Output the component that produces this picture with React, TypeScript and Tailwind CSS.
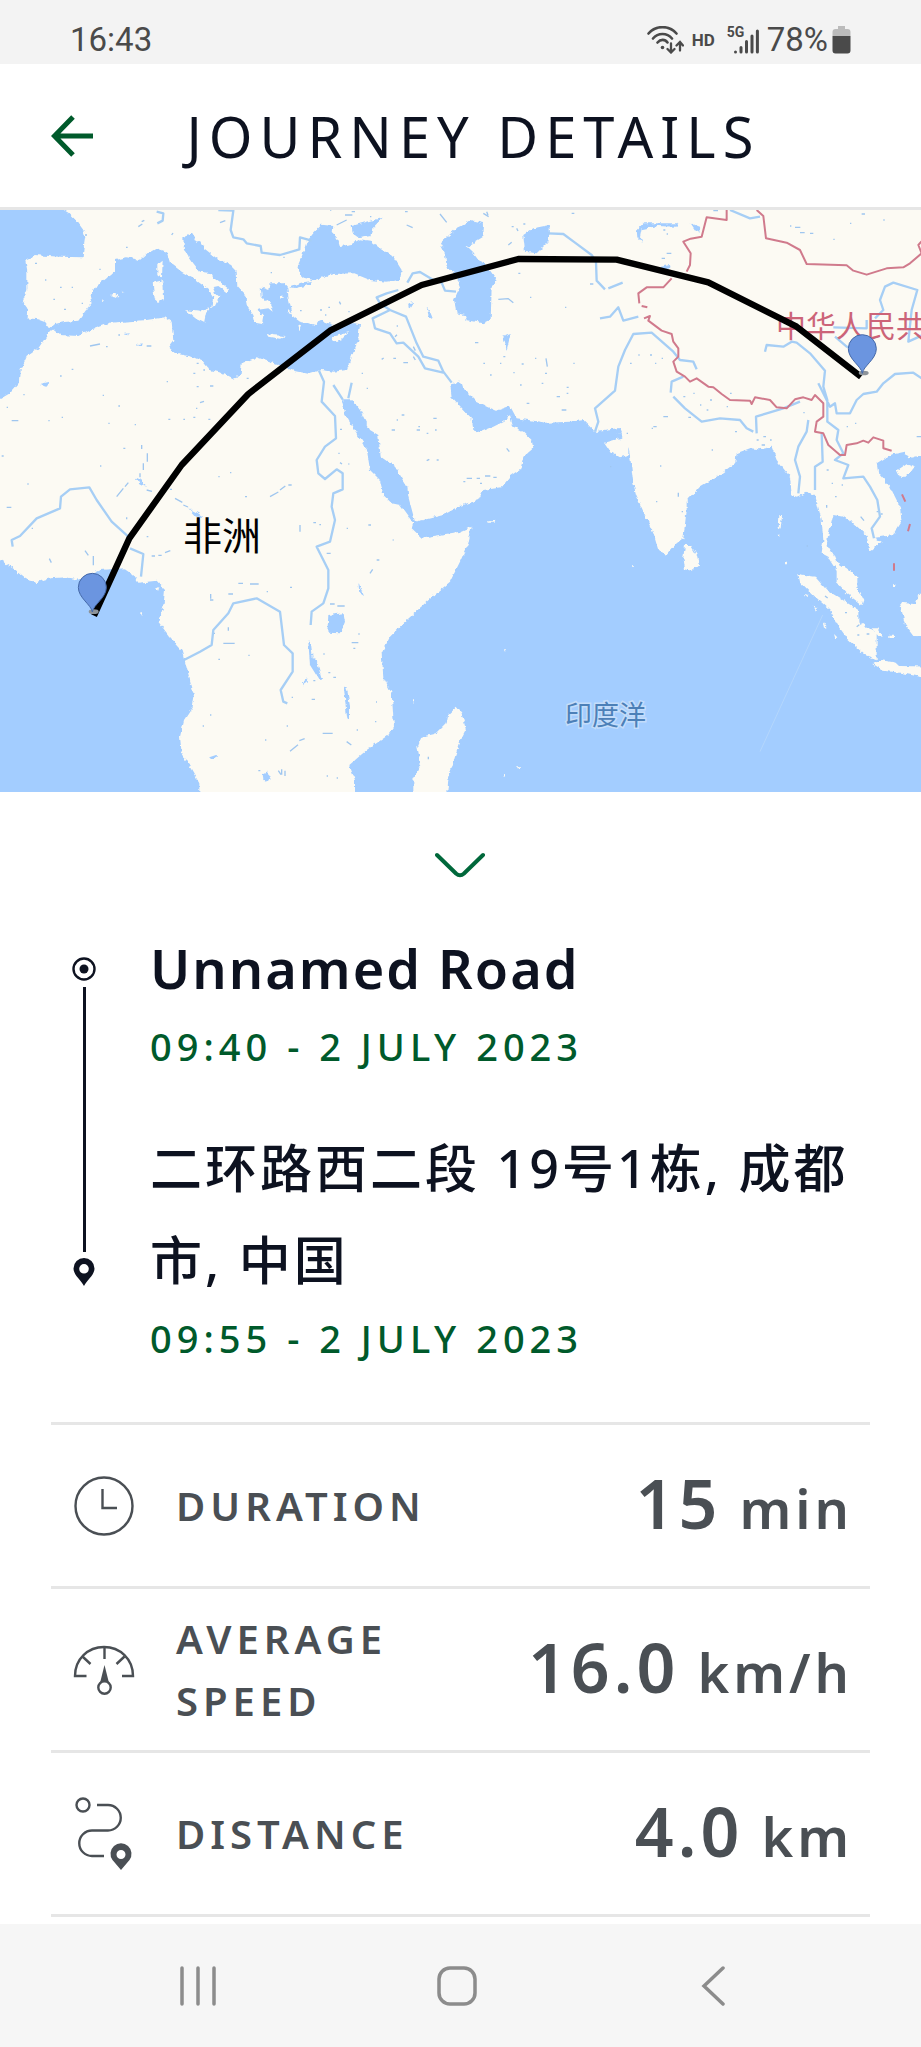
import { ReactNode } from "react";

// geography is drawn on a 2763 wide grid, three units for each pixel of the map
const seas = [
  // Atlantic and Mediterranean
  "M0 20L175 20 205 38 232 65 250 90 256 110 252 135 248 172 180 170 100 165 98 172 76 182 82 215 82 270 68 305 82 325 80 355 115 358 135 365 150 385 165 372 190 366 235 362 262 325 275 310 270 290 290 258 345 215 345 180 380 172 420 180 440 162 470 145 500 155 510 188 545 215 580 235 600 250 625 268 640 290 633 328 645 318 658 290 645 278 638 262 655 258 680 277 687 268 660 245 640 232 635 220 600 215 580 190 560 160 552 150 550 112 578 100 588 125 600 122 612 145 650 175 690 195 710 215 712 260 735 285 742 320 760 345 766 368 786 372 790 350 770 330 805 325 818 335 812 318 785 290 782 262 805 270 808 250 852 250 862 262 865 290 880 350 900 365 950 375 960 360 1000 375 1035 370 1060 370 1080 372 1075 420 1055 470 1040 510 1000 515 965 510 925 522 880 512 830 492 770 472 725 490 722 520 705 538 670 520 630 510 610 485 580 472 525 460 505 440 520 420 515 365 495 352 440 360 330 368 270 390 235 408 180 405 158 388 150 392 135 415 115 445 80 470 62 510 60 545 30 580 0 597 -40 597 -40 20Z",
  // Black Sea, Azov, Marmara
  "M965 74L1000 78 998 98 1012 112 1020 138 1055 132 1080 118 1110 122 1140 145 1180 170 1205 210 1200 240 1160 245 1110 240 1060 220 1000 222 940 240 905 232 892 200 905 170 920 125 940 100Z",
  "M1055 78L1090 68 1148 53 1120 82 1115 108 1080 114 1058 98Z",
  "M865 262L900 248 940 242 925 256 890 264Z",
  // Caspian, Aral
  "M1370 85L1320 130 1335 160 1340 200 1365 220 1380 260 1362 300 1370 340 1395 345 1400 360 1450 370 1472 360 1475 262 1490 240 1455 190 1435 180 1420 160 1400 140 1450 110 1452 70 1410 60 1385 78Z",
  "M1570 105L1600 85 1648 75 1650 98 1645 125 1610 160 1575 155Z",
  // South Atlantic
  "M-40 1080L0 1080 40 1105 85 1140 110 1147 150 1135 200 1132 235 1140 300 1110 370 1105 400 1125 415 1148 470 1142 495 1170 490 1220 475 1265 505 1305 545 1350 555 1385 570 1440 583 1490 578 1520 552 1560 540 1610 545 1660 575 1710 598 1750 598 1800 -40 1800Z",
  // Red Sea, Gulf, Indian Ocean, South China Sea
  "M1025 598L1055 598 1080 630 1110 690 1135 705 1142 770 1185 800 1222 860 1225 890 1245 965 1270 960 1330 945 1380 918 1435 900 1450 870 1505 862 1530 830 1560 810 1570 770 1600 745 1595 720 1570 695 1540 680 1530 645 1510 665 1480 680 1440 697 1420 690 1415 655 1400 640 1380 618 1355 590 1350 550 1380 545 1400 575 1430 605 1490 632 1530 618 1550 655 1640 668 1710 665 1750 660 1785 695 1820 695 1860 685 1868 712 1812 728 1830 755 1860 772 1885 765 1885 740 1892 780 1900 850 1910 890 1935 945 1960 1000 1975 1050 2000 1065 2030 1030 2050 1015 2060 930 2060 905 2075 888 2100 860 2150 830 2205 790 2210 760 2250 745 2280 748 2315 740 2330 780 2370 830 2375 885 2390 890 2425 875 2445 885 2465 960 2470 1020 2465 1060 2485 1070 2510 1110 2510 1145 2540 1180 2585 1215 2590 1200 2572 1165 2572 1130 2540 1105 2508 1085 2500 1065 2480 1035 2485 1005 2500 945 2530 950 2560 970 2600 1005 2608 1055 2645 1025 2625 1013 2680 1005 2705 965 2700 920 2670 860 2635 820 2630 790 2670 765 2715 755 2725 775 2800 758 2800 1800 1065 1800 1065 1740 1048 1695 1100 1650 1165 1605 1182 1580 1175 1480 1150 1430 1145 1360 1170 1310 1210 1270 1280 1205 1350 1145 1380 1085 1405 1030 1415 980 1380 995 1265 1013 1235 985 1240 970 1200 915 1175 910 1150 885 1140 840 1110 810 1100 745 1070 700 1035 640Z",
  // lakes
  "M985 1245L1030 1240 1035 1265 1022 1300 982 1298Z",
  "M925 1325L932 1325 938 1370 952 1390 966 1438 958 1440 930 1395Z",
  "M1032 1460L1040 1462 1050 1515 1050 1560 1042 1555 1036 1510Z",
  "M788 1722L800 1715 812 1728 803 1745 790 1740Z",
  "M906 1450L922 1434 920 1448 908 1456Z",
  "M628 1672L650 1664 650 1672 632 1680Z",
  "M1910 90L1930 70 1975 70 2035 70 2030 80 1970 78 1925 88 1920 112 1928 130 1912 112Z",
  "M2072 70L2100 80 2102 98 2088 94Z",
  "M1975 202L2010 195 2012 205 1980 210Z",
  "M1220 312L1242 305 1232 322Z",
  "M1280 322L1292 340 1298 355 1286 348Z",
  "M1510 410L1532 402 1520 450 1516 430Z",
  "M565 925L592 938 610 950 588 950Z",
  "M120 552L150 545 140 560Z",
  "M410 832L430 848 438 860 418 850Z",
  "M372 402L390 400 384 406Z M412 432L428 430 426 438 414 438Z",
  "M1795 692L1860 684 1866 700 1800 702Z",
  "M1075 1145L1082 1165 1092 1188 1078 1178Z",
];

const islands = [
  "M555 330L600 335 630 325 618 340 612 368 590 358Z",
  "M458 248L490 240 492 295 474 306 464 298Z",
  "M472 195L488 182 486 232 472 226Z",
  "M800 402L825 406 858 408 840 416 805 410Z",
  "M995 412L1048 396 1025 418 1005 424Z",
  "M330 285L345 278 355 287 344 293Z M303 302L312 300 308 306Z M362 275L370 275 366 279Z",
  "M1000 100L1030 92 1052 98 1050 112 1055 130 1030 138 1020 125Z",
  "M798 300L812 310 818 322 804 318Z M836 288L850 292 838 296Z M868 330L880 345 866 340Z M895 372L903 378 898 392Z",
  // Madagascar
  "M1240 1800L1240 1740 1262 1690 1252 1640 1265 1610 1310 1600 1340 1570 1345 1545 1370 1520 1385 1540 1398 1590 1380 1625 1365 1670 1345 1740 1340 1800Z",
  // Sri Lanka, Socotra
  "M2055 1035L2072 1035 2090 1065 2097 1095 2075 1112 2055 1108 2050 1070Z",
  "M1464 964L1486 962 1484 968 1466 968Z",
  // Sumatra, Java, Borneo, Hainan
  "M2395 1122L2445 1130 2480 1170 2520 1195 2575 1230 2575 1265 2600 1280 2630 1300 2630 1378 2595 1365 2545 1320 2520 1285 2490 1230 2440 1185 2400 1145Z",
  "M2620 1392L2640 1380 2690 1388 2700 1398 2800 1400 2800 1438 2700 1418 2650 1412Z",
  "M2700 1208L2745 1212 2755 1185 2800 1180 2800 1310 2740 1308 2715 1275Z",
  "M2690 810L2720 790 2745 800 2720 830 2700 830Z",
  "M2338 945L2346 945 2342 985 2336 988Z M2330 1004h8v4h-8z M2358 1085h6v8h-6z",
  "M2410 1185L2425 1188 2420 1194Z M2438 1215L2452 1225 2448 1232Z M2468 1265L2480 1282 2472 1284Z M2502 1302L2512 1312 2506 1316Z",
  "M2615 1285L2635 1285 2648 1310 2635 1308Z M2668 1304h14v10h-14z M2678 1153h8v8h-8z",
  "M465 1163L475 1158 472 1172Z M421 1240h5v6h-5z",
  "M1508 1720L1518 1724 1512 1732Z M1552 1702h8v6h-8z M1238 1498h4v14h-4z M1510 1350h4v4h-4z M1896 1096h6v4h-6z",
];

const rivers = [
  "M655 30L700 32 692 90 700 112 730 118 740 130 782 138 785 158 840 165 898 148 900 112 935 122",
  "M470 35L490 40 488 62 472 70",
  "M957 512L972 545 965 605 1005 648 1008 715 975 740 950 780 955 820 975 837 1010 808 1028 820 1028 868 1000 880 995 920 1005 960 990 1025 950 1040 985 1110 985 1165 970 1210 935 1235 932 1275",
  "M38 1040L35 1020 60 1008 110 955 180 925 183 890 210 868 268 862 290 900 335 965 385 1010",
  "M390 1045L430 1062 423 1130",
  "M552 1380L600 1355 635 1335 640 1290 685 1240 700 1210 770 1195 840 1235 852 1335 878 1360 878 1415 842 1470 850 1505 862 1510",
  "M1195 270L1160 280 1130 292 1140 310 1170 330 1218 350 1250 430 1270 470 1315 482 1330 515 1355 548",
  "M1170 330L1118 355 1125 385 1170 400 1190 430 1210 428 1255 470 1275 505 1330 518",
  "M1000 555L1028 598 M1055 548L1045 595",
  "M1222 248L1238 220 1260 216 1300 240 1325 248 1335 272 1368 275",
  "M1645 100L1690 102 1725 128 1775 165 1788 185 1790 242 1815 268 M1825 265L1868 248",
  "M1800 355L1830 350 1855 322 1870 362 1915 350",
  "M1785 695L1795 665 1785 625 1845 572 1855 500 1875 450 1900 402 1955 398 2020 455 2040 480 2080 485 2090 508",
  "M2050 530L2015 545 2012 578 M2020 590L2055 625 2105 665 2160 655 2220 660 2240 685 2260 695",
  "M2270 700L2268 650 2300 640 2350 625 2400 605",
  "M2425 660L2420 695 2395 740 2385 780 2400 830 2395 880",
  "M2465 700L2468 785 2445 800 2445 870",
  "M2295 455L2300 435 2350 440 2375 425 2390 428 2430 460 2475 512 2470 560 2482 600 2482 665 2515 690 2510 720 2530 760 2505 780 2545 795 2530 835 2590 830 2610 860 2632 900 2640 950 2615 985 2622 1015",
  "M2455 550L2490 620 2505 610 2510 640 2550 640 2570 600 2590 582 2630 575 2650 550 2685 522 2740 518 2780 545",
  "M2500 382L2600 385 2600 360 M2625 355L2650 330 2640 300 2655 260 2680 248 2752 270 2735 330 2725 425 2780 400",
  "M2505 410L2540 440 2580 450 M2190 30L2250 55 2280 50",
];

const borders = [
  "M2180 30L2180 60 2120 52 2105 110 2072 116 2050 125 2072 160 2070 195 2060 215",
  "M2015 235L1990 262 1940 262 1915 280 1918 310 M1925 318L1942 322 M1932 355L1950 348 1945 362 1985 392 2015 402 2020 425 2035 445 2035 470 2020 485 2030 515 2055 530 2070 545 2090 535 2125 560 2140 562 2165 582 2190 600 2250 602 2255 612 2265 592 2310 600 2330 622 2360 625 2385 598 2410 592 2435 600 2445 585 2470 610 2470 650 2450 665 2445 695 2470 700 2485 735 2520 765 2535 765 2540 735 2570 730 2590 722 2605 728 2620 712 2650 722 2650 745 2675 752",
  "M2270 30L2290 48 2298 115 2360 128 2400 150 2420 192 2540 196 2560 212 2600 224 2660 205 2710 202 2730 190 2765 160 2755 135 2770 118",
  "M2706 883L2716 905 M2730 972L2724 994 M2682 1090L2682 1112",
];

const specks =
  "M105 190h6M135 240h4M180 262h5M215 262h4M160 298h5M192 328h6M245 310h4M298 208h4M255 105h6M378 142h5M415 80l12-8M425 65l8-4M660 68l16-6M515 105l4-6M812 218h4M850 172h4M900 332h5M960 330h6M975 345h4M985 322h5M1018 305l4 8M1045 335h4M1010 75l30-15M1035 45h22M1055 35h10M1110 50h4M1220 75l18 8M1215 35h8M1320 42l20 25M1240 440l6 12M1185 410l6-6M1190 378h4M1145 478l6-4M1180 475h8M1210 488h14M1240 470l6 10M1085 520h4M1100 565h4M1205 645h8M1175 690h10M1250 690h10M1300 655h10M1305 690h5M1255 680h5M1310 780h6M1280 782l8-4M1020 688h6M1015 760h4M1020 788l6 4M1045 792h3M270 438l30-6M318 440h5M440 438h14M355 405h5M215 508h5M180 528h5M500 545h4M308 586h4M355 618h5M325 670h4M404 674h4M35 662h20M70 584h4M20 622h4M145 662h4M185 652h4M5 768h6M82 852h4M300 798h4M370 745h6M425 735v12M442 760v25M430 790v20M420 820v12M440 870l16 4M350 890l20-25M375 860l10-12M580 520h6M590 490h6M610 510h5M590 560h6M630 558h10M600 608l12-4M588 625h4M505 658h6M550 658h5M580 652h6M625 658h6M740 535h6M690 818h4M655 830h4M840 870l16-12M865 855h10M810 890l25-14M735 890h6M1280 700h5M1190 660h4M380 952v6M525 895l22 12M550 915l14 6M510 868h6M440 1010h5M455 1068h10M475 1066h10M495 1058l16-6M280 1068v28M255 1052l10 14M148 1076l6 12M20 922h14M95 985h4M900 975v20M940 968h8M958 974h5M1040 985h4M1105 975h8M1130 1080h8M1110 1120l8-12M1178 1020h3M980 1060h12M990 1212h14M1012 1218h22M715 1150h14M750 1152h26M632 1182v14M685 1182h14M630 1200h10M670 1330h34M685 1282v10M640 1300h5M655 1378h5M745 1366h4M800 1175h4M870 1162h6M970 1362h4M1055 1328h20M1075 1302h4M1060 1345h6M940 1442h6M985 1418h6M1000 1432h8M935 1498h10M875 1492h4M630 1545h4M608 1578h4M795 1620h4M860 1578h4M870 1654l24-20M898 1622l16-6M968 1600h30M1040 1625l14 10M1128 1506h3M835 1712l8 12M845 1708v16M855 1712v16M775 1712h6M1070 1590h4M1125 1565h4M1285 1670v8M980 1728h4M1010 1734h4M990 30h4M1450 40l16 10M1460 35l4 10M1525 135l10-8M1535 80h6M1570 72h6M1550 85l4 8M1715 40h8M1555 220h6M1495 298l30-2 15 12M1590 292h4M1695 322h4M1425 428h10M1450 490h5M1470 525h5M1510 470h6M1565 492h6M1638 475l4 25M1635 520h6M1560 555h5M1605 475h4M1580 610h8M1625 550h5M1670 590h10M1685 630h14M1700 562h6M1770 252h10M1720 490h4M1700 580h5M1540 518h4M1500 490h4M1520 745l8 10M1400 835h16M1430 835h10M1455 828h16M1480 832h10M1440 850h6M1390 845h6M2000 160h14M1985 175h10M1990 90h6M2000 102h4M2140 32h14M2385 82h16M2400 98h14M2430 100h10M2500 118h4M2550 70h4M2585 42h10M2650 60h4M2370 78h4M1915 465h4M1950 465h6M1965 490h4M1985 475h4M1890 490h5M2050 590h6M2080 580h4M2130 600h6M2180 620h4M2120 630h5M2100 615h4M2190 580h5M1960 680h10M1990 650h14M1955 685h4M2065 652h8M2205 695h6M2270 720h6M2285 735h10M2290 710h8M2310 720h5M1880 700h4M2135 750h4M2410 638h4M2480 810h6M2565 670h4M2540 680h4M2480 915v8M2505 890h5M2582 950l10 12M2630 935h4M2642 942h6M1980 798h4M1968 905h4M2035 878v12M2045 935h4M2420 1038h4M1830 800h4M2475 1188l8 6M2535 1238h6M2570 1280l8-6M2600 1302h8M2572 1305h6M2750 710h14M2495 850h4M2525 855h4";

const routePoints =
  "282,1247 388,1015 545,795 745,582 990,392 1265,255 1555,177 1850,179 2125,247 2390,380 2583,530";

function Pin({ x, y }: { x: number; y: number }) {
  return (
    <g transform={`translate(${x} ${y})`}>
      <ellipse cx="4" cy="-1" rx="15" ry="7" fill="#8d9399" />
      <path
        d="M0 0C-3 -22 -42 -42 -42 -74A42 42 0 0 1 42 -74C42 -42 3 -22 0 0Z"
        fill="#6b95e0"
        stroke="#4468a8"
        strokeWidth="3"
      />
    </g>
  );
}

function JourneyMap() {
  return (
    <svg className="block w-full" viewBox="0 0 921 582" role="img" aria-label="Journey map">
      <defs>
        {/* roughens the coastlines */}
        <filter id="coast" x="0" y="0" width="100%" height="100%" colorInterpolationFilters="sRGB">
          <feTurbulence type="fractalNoise" baseFrequency="0.07" numOctaves="2" seed="4" result="noise" />
          <feDisplacementMap in="SourceGraphic" in2="noise" scale="14" xChannelSelector="R" yChannelSelector="G" />
        </filter>
      </defs>
      <rect width="921" height="582" fill="#fcfaf3" />
      <g transform="translate(0 -10) scale(0.33333)" strokeLinejoin="round" fill="none">
        <g filter="url(#coast)">
          <rect x="-60" y="-60" width="2900" height="1900" fill="#fcfaf3" />
          <path d={seas.join("")} fill="#a3cdff" />
          <path d={islands.join("")} fill="#fcfaf3" />
        </g>
        <path d={specks} stroke="#9fc6ef" strokeWidth="4" />
        <path d={rivers.join("")} stroke="#a6cef5" strokeWidth="7" />
        <path d={borders.join("")} stroke="#d07a8c" strokeWidth="6" />
        <path d="M2468 1245L2280 1655" stroke="#b4d6fc" strokeWidth="3" />
      </g>
      <g className="font-['Noto_Sans_CJK_SC',sans-serif]">
        <text x="776" y="127" fontSize="30" fill="#cc6478">
          中华人民共
        </text>
        <text x="183" y="340" fontSize="39" fill="#000">
          非洲
        </text>
        <text x="565" y="515" fontSize="27" fill="#4c80b8" stroke="#c4ddfa" strokeWidth="3" paintOrder="stroke">
          印度洋
        </text>
      </g>
      <g transform="translate(0 -10) scale(0.33333)">
        <polyline points={routePoints} fill="none" stroke="#000" strokeWidth="19" strokeLinejoin="round" />
        <Pin x={277} y={1236} />
        <Pin x={2587} y={520} />
      </g>
    </svg>
  );
}

function StatusBar() {
  return (
    <div className="flex h-16 items-end justify-between bg-[#f3f3f3] pr-[70px] pb-1 pl-[70px] font-[Roboto,sans-serif] text-[33px] leading-10 text-[#4a4a4a]">
      <span>16:43</span>
      <div className="flex items-center">
        <svg className="mr-2 h-7 w-[37px]" viewBox="0 0 37 28" fill="none" stroke="#4a4a4a" strokeWidth="2.6" strokeLinecap="round">
          <path d="M1.5 7.5C9-1 22-1 29.500 7.500M6 12.500C11 6.500 20 6.500 25 12.500M10.500 16.500C13.500 13 18 13 20.500 16.500" />
          <circle cx="15.500" cy="21.500" r="1.800" fill="#4a4a4a" stroke="none" />
          <path d="M24 17.500V26M20.500 23L24 26.500 27.500 23M33 24.500V16.500M29.500 19.500L33 16 36 19.500" strokeWidth="2.300" />
        </svg>
        <span className="mr-3 text-[17px] font-bold">HD</span>
        <div className="relative mr-2 h-7 w-8">
          <span className="absolute top-0 left-0 text-[14px] leading-3 font-bold">5G</span>
          <svg className="h-7 w-8" viewBox="0 0 32 28" stroke="#4a4a4a" strokeWidth="3" strokeLinecap="round">
            <path d="M8.500 26V26.100M14 21.500V26M19.500 15.500V26M25 10V26M30.400 5V26" />
          </svg>
        </div>
        <span>78%</span>
        <svg className="ml-1 h-7 w-[19px]" viewBox="0 0 19 28">
          <path d="M6 0h7v3h2.500a3 3 0 0 1 3 3v4H.5V6a3 3 0 0 1 3-3H6z" fill="#bbb" />
          <path d="M.5 10h18v14.500a3 3 0 0 1-3 3h-12a3 3 0 0 1-3-3z" fill="#4a4a4a" />
        </svg>
      </div>
    </div>
  );
}

function Stop({ name, time, nameClass }: { name: string; time: string; nameClass: string }) {
  return (
    <div>
      <h2 className={`leading-[92px] text-[#0d1220] ${nameClass}`}>{name}</h2>
      <p className="text-[38px] leading-16 font-medium tracking-[5px] text-[#005a2b]">{time}</p>
    </div>
  );
}

function Stat({ icon, label, value, unit }: { icon: ReactNode; label: string; value: string; unit: string }) {
  return (
    <div className="flex min-h-[164px] items-center border-t-3 border-[#e6e6e6] pr-[17px] pl-[21px] text-[#4a4f54]">
      <div className="mr-10 w-16 shrink-0">{icon}</div>
      <dt className="w-[260px] text-[40px] leading-[62px] font-semibold tracking-[5px]">{label}</dt>
      <dd className="ml-auto text-[54px] leading-[80px] font-semibold tracking-[4px] whitespace-nowrap">
        <span className="text-[68px]">{value}</span> {unit}
      </dd>
    </div>
  );
}

const ClockIcon = (
  <svg className="h-[60px] w-[64px]" viewBox="0 0 64 60" fill="none" stroke="#4a4f54" strokeWidth="2.400">
    <circle cx="32" cy="30" r="28.500" />
    <path d="M30.500 13V32H45" />
  </svg>
);

const SpeedIcon = (
  <svg className="h-[50px] w-[64px]" viewBox="0 0 64 50" fill="none" stroke="#4a4f54" strokeWidth="2.400">
    <path d="M14.500 31H3C3 14 16 2 32 2S61 14 61 31H50" />
    <path d="M32.500 2V14M10.500 11.500L18.500 19M52.500 11.500L44.500 19" />
    <path d="M32.500 20L28 38H37Z" fill="#4a4f54" stroke="none" />
    <circle cx="32.500" cy="42.500" r="6.200" fill="#fff" />
  </svg>
);

const DistanceIcon = (
  <svg className="h-[74px] w-[64px]" viewBox="0 0 64 74" fill="none" stroke="#4a4f54" strokeWidth="2.400">
    <circle cx="11" cy="8" r="6.500" />
    <path d="M25 8H36A12.700 12.700 0 0 1 36 33.500H20A12.700 12.700 0 0 0 20 59H32" />
    <path
      d="M49 73L40.500 63A10.500 10.500 0 1 1 57.500 63ZM49 53A4.500 4.500 0 1 0 49 62A4.500 4.500 0 1 0 49 53Z"
      fill="#4a4f54"
      fillRule="evenodd"
      stroke="none"
    />
  </svg>
);

export default function App() {
  return (
    <div className="flex min-h-screen flex-col bg-white font-['Noto_Sans','Noto_Sans_CJK_SC',sans-serif]">
      <StatusBar />

      <header className="flex h-[146px] items-center border-b-3 border-[#e6e6e6] px-[51px]">
        <button type="button" aria-label="Back">
          <svg className="h-[42px] w-[42px]" viewBox="0 0 42 42" fill="none" stroke="#005a2b" strokeWidth="5">
            <path d="M42 21H4M22 2L3.500 21 22 40" />
          </svg>
        </button>
        <h1 className="flex-1 text-center text-[56px] leading-[80px] tracking-[7px] text-[#0d1220]">JOURNEY DETAILS</h1>
        <div className="w-4"></div>
      </header>

      <JourneyMap />

      <main className="flex-1 px-[51px]">
        <div className="flex justify-center pt-15 pb-11">
          <button type="button" aria-label="Collapse">
            <svg className="block h-[26px] w-[52px]" viewBox="0 0 52 26" fill="none" stroke="#00683b" strokeWidth="4" strokeLinecap="round">
              <path d="M2 3L21 21.500Q25 25 29 21.500L48 3" />
            </svg>
          </button>
        </div>

        <div className="flex gap-[54px] pr-2 pb-[52px] pl-[21px]">
          <div className="flex shrink-0 flex-col items-center gap-1.5 pt-[35px] pb-[84px]">
            <svg className="h-6 w-6" viewBox="0 0 24 24" fill="none" stroke="#0d1220" strokeWidth="2.400">
              <circle cx="12" cy="12" r="10.500" />
              <circle cx="12" cy="12" r="4.500" fill="#0d1220" stroke="none" />
            </svg>
            <div className="w-[3px] flex-1 bg-[#0d1220]"></div>
            <svg className="h-7 w-6" viewBox="0 0 24 28">
              <path
                d="M12 28C9 22 1.500 17 1.500 10.500A10.500 10.500 0 0 1 22.500 10.500C22.500 17 15 22 12 28ZM12 6A4.800 4.800 0 1 0 12 15.600A4.800 4.800 0 1 0 12 6Z"
                fill="#0d1220"
                fillRule="evenodd"
              />
            </svg>
          </div>
          <div className="flex flex-col gap-11">
            <Stop
              name="Unnamed Road"
              time="09:40 - 2 JULY 2023"
              nameClass="text-[54px] font-semibold tracking-[2px]"
            />
            <Stop
              name="二环路西二段 19号1栋, 成都市, 中国"
              time="09:55 - 2 JULY 2023"
              nameClass="text-[52px] font-medium tracking-[3px]"
            />
          </div>
        </div>

        <dl className="border-b-3 border-[#e6e6e6]">
          <Stat icon={ClockIcon} label="DURATION" value="15" unit="min" />
          <Stat icon={SpeedIcon} label="AVERAGE SPEED" value="16.0" unit="km/h" />
          <Stat icon={DistanceIcon} label="DISTANCE" value="4.0" unit="km" />
        </dl>
      </main>

      <nav className="flex h-[123px] items-center justify-between bg-[#f6f6f6] pr-[196px] pl-[180px]">
        <button type="button" aria-label="Recent apps">
          <svg className="h-10 w-9" viewBox="0 0 36 40" stroke="#8c8c8c" strokeWidth="3.500" strokeLinecap="round">
            <path d="M2 2V38M18 2V38M34 2V38" />
          </svg>
        </button>
        <button type="button" aria-label="Home">
          <svg className="h-10 w-10" viewBox="0 0 40 40" fill="none" stroke="#8c8c8c" strokeWidth="3.500">
            <rect x="2" y="2" width="36" height="36" rx="11" />
          </svg>
        </button>
        <button type="button" aria-label="Go back">
          <svg className="h-10 w-7" viewBox="0 0 28 40" fill="none" stroke="#8c8c8c" strokeWidth="3.500" strokeLinecap="round">
            <path d="M26 2L7 20 26 38" />
          </svg>
        </button>
      </nav>
    </div>
  );
}
